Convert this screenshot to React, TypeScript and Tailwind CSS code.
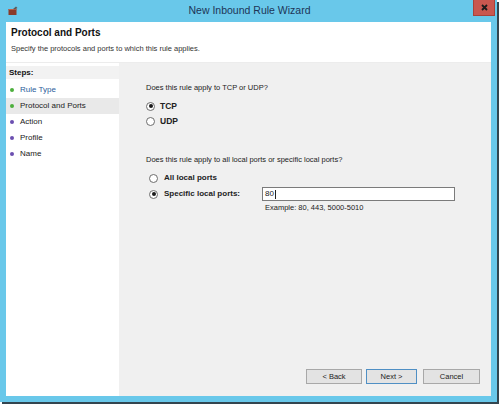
import React from "react";

const font = { fontFamily: '"Liberation Sans", Arial, sans-serif' };

function Radio({ checked }: { checked?: boolean }) {
  return (
    <span className="w-[9px] h-[9px] rounded-full border border-[#6d6d6d] bg-white flex items-center justify-center shrink-0">
      {checked && <span className="w-[4px] h-[4px] rounded-full bg-[#1a1a1a]" />}
    </span>
  );
}

function Step({ label, color, active, current }: { label: string; color: string; active?: boolean; current?: boolean }) {
  return (
    <div className={`h-[16px] flex items-center pl-[4px] gap-[6px] ${current ? "bg-[#e9e9e9]" : ""}`}>
      <span className="w-[4px] h-[4px] rounded-full" style={{ background: color }} />
      <span className={`text-[8px] ${active ? "text-[#2a5d9a]" : "text-[#222]"}`}>{label}</span>
    </div>
  );
}

function Button({ label, primary, w = "w-[57px]" }: { label: string; primary?: boolean; w?: string }) {
  return (
    <button
      className={`${w} h-[15px] bg-[#e3e3e3] border text-[7.5px] text-[#222] flex items-center justify-center ${
        primary ? "border-[#4f8fc4]" : "border-[#a8a8a8]"
      }`}
    >
      {label}
    </button>
  );
}

export default function App() {
  return (
    <div className="w-[504px] h-[408px] bg-white" style={font}>
      <div className="w-[497px] h-[402px] bg-[#69c8ea] flex flex-col shadow-[2px_2px_0_#33454f]">
        {/* title bar */}
        <div className="h-[22px] flex items-center relative shrink-0">
          <svg className="absolute left-[8px] top-[6px]" width="10" height="10" viewBox="0 0 10 10">
            <rect x="0.5" y="3" width="8" height="6" fill="#8a3b2a" />
            <rect x="0.5" y="3" width="8" height="1" fill="#c06048" />
            <path d="M5 3 L8 0.5 L9.5 2 L7 3.5 Z" fill="#5a5a5a" />
          </svg>
          <div className="flex-1 text-center text-[10.5px] text-[#1d3557] pl-[2px]">New Inbound Rule Wizard</div>
          <div className="absolute right-[2px] top-0 w-[22px] h-[16px] bg-[#c9574f] border-x border-b border-[#a8423b] flex items-center justify-center">
            <svg width="7" height="7" viewBox="0 0 7 7">
              <path d="M1 1 L6 6 M6 1 L1 6" stroke="#1c1c1c" strokeWidth="1.8" />
            </svg>
          </div>
        </div>

        {/* client area */}
        <div className="flex-1 mx-[6px] mb-[6px] flex flex-col bg-white">
          <div className="h-[41px] shrink-0 bg-white pl-[5px] pt-[3px] border-b border-[#ececec]">
            <div className="text-[10px] font-bold text-[#111]">Protocol and Ports</div>
            <div className="text-[7.5px] text-[#333] mt-[3px]">Specify the protocols and ports to which this rule applies.</div>
          </div>

          <div className="flex-1 flex">
            <div className="w-[113px] bg-white pt-[3px]">
              <div className="h-[13px] bg-[#f2f2f2] flex items-center pl-[3px] text-[8px] font-bold text-[#111]">Steps:</div>
              <div className="mt-[3px]">
                <Step label="Rule Type" color="#4caf3c" active />
                <Step label="Protocol and Ports" color="#4caf3c" current />
                <Step label="Action" color="#6b4fb0" />
                <Step label="Profile" color="#6b4fb0" />
                <Step label="Name" color="#6b4fb0" />
              </div>
            </div>

            <div className="flex-1 bg-[#f0f0f0] flex flex-col pl-[27px] pr-[11px] text-[#222]">
              <div className="h-[10px] leading-[10px] text-[7.5px] mt-[20px]">Does this rule apply to TCP or UDP?</div>
              <div className="h-[10px] flex items-center gap-[5px] mt-[8px] text-[8.5px] font-bold">
                <Radio checked />
                TCP
              </div>
              <div className="h-[10px] flex items-center gap-[5px] mt-[5px] text-[8.5px] font-bold">
                <Radio />
                UDP
              </div>

              <div className="h-[10px] leading-[10px] text-[7.5px] mt-[29px]">
                Does this rule apply to all local ports or specific local ports?
              </div>
              <div className="h-[10px] flex items-center gap-[6px] mt-[8px] pl-[3px] text-[8px] font-bold">
                <Radio />
                All local ports
              </div>
              <div className="h-[14px] flex items-center mt-[4px] pl-[3px] text-[8px] font-bold">
                <Radio checked />
                <span className="ml-[6px] w-[98px]">Specific local ports:</span>
                <div className="w-[193px] h-[14px] bg-white border border-[#7b7b7b] flex items-center pl-[2px] text-[8px] font-normal">
                  80<span className="w-px h-[9px] bg-[#222] ml-px" />
                </div>
              </div>
              <div className="h-[10px] leading-[10px] text-[7.5px] ml-[119px] mt-[2px]">Example: 80, 443, 5000-5010</div>

              <div className="flex-1" />
              <div className="flex justify-end mb-[12px]">
                <Button label="< Back" w="w-[56px]" />
                <div className="w-[4px]" />
                <Button label="Next >" primary w="w-[51px]" />
                <div className="w-[6px]" />
                <Button label="Cancel" />
              </div>
            </div>
          </div>
        </div>
      </div>
    </div>
  );
}
